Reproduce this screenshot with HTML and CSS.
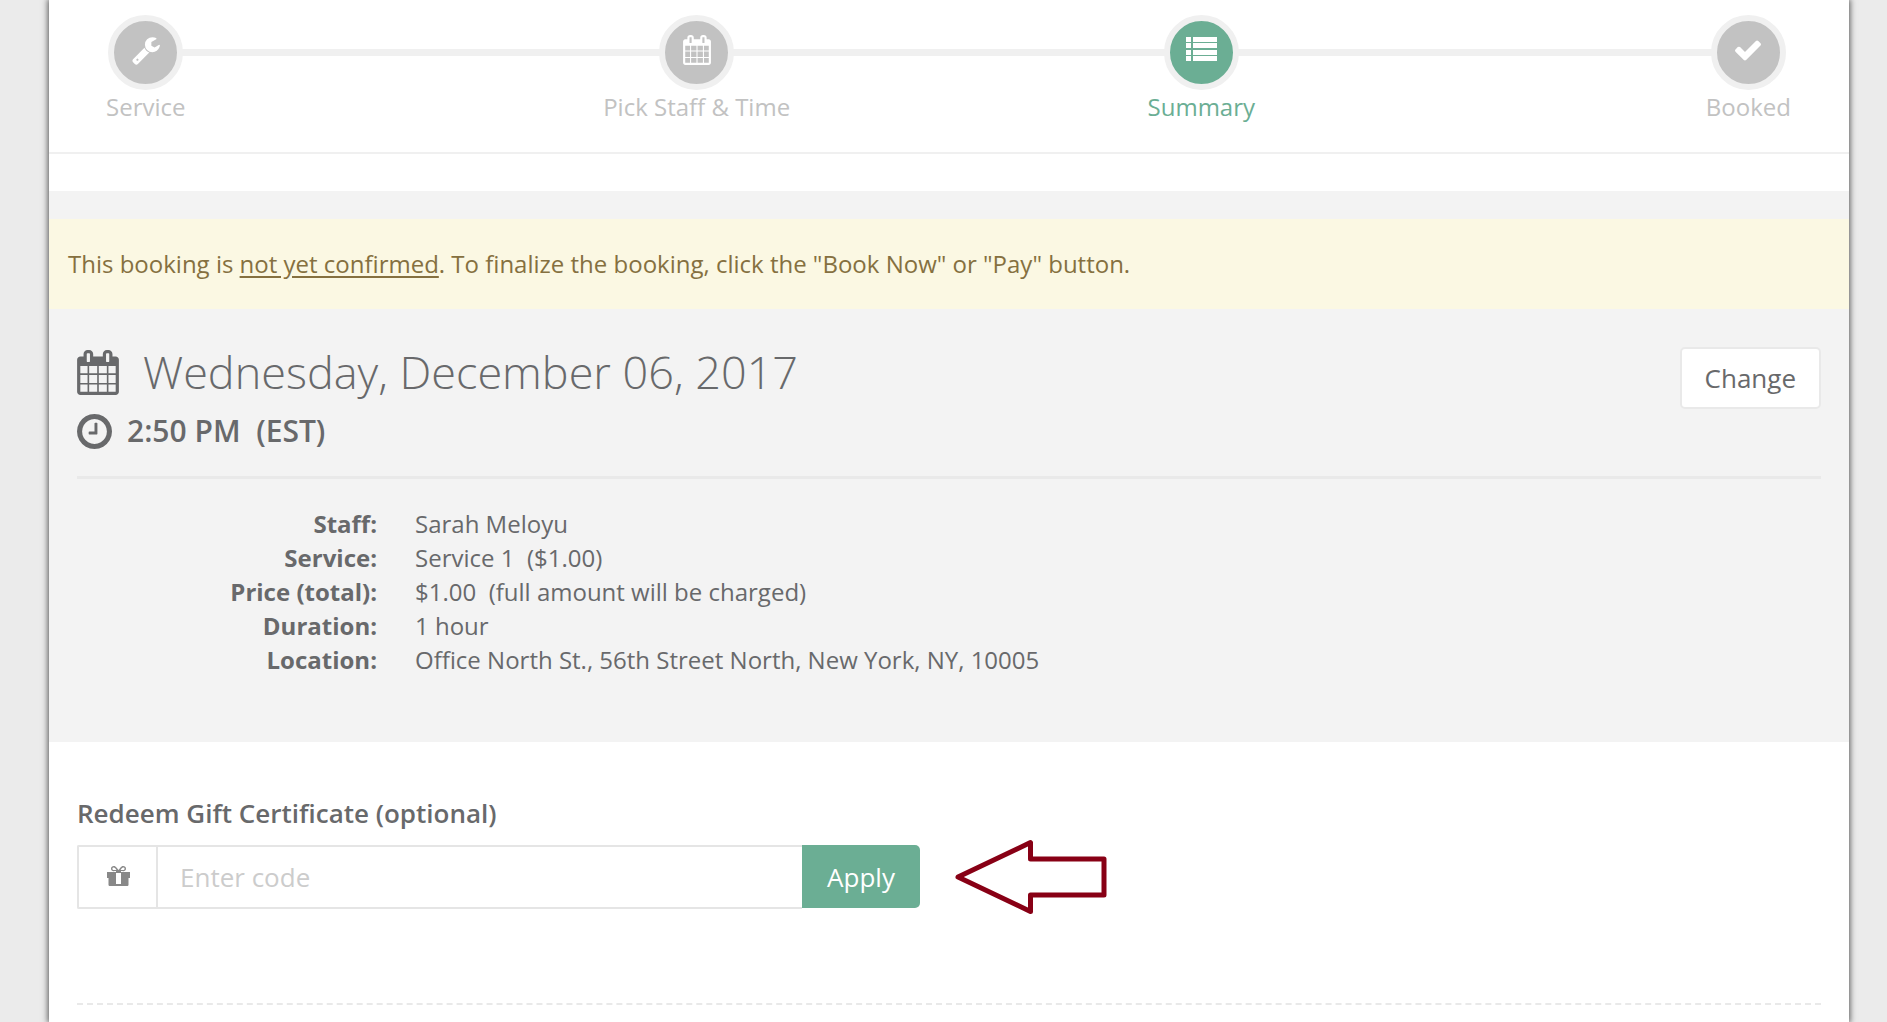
FILE: index.html
```html
<!DOCTYPE html>
<html lang="en">
<head>
  <meta charset="utf-8">
  <title>Booking Summary</title>
  <link rel="stylesheet" href="styles.css">
</head>
<body>
  <main class="booking">
    <ol class="steps">
      <li class="step">
        <span class="step-icon">
          <svg viewBox="0 0 1792 1792"><path d="M448 1472q0-26-19-45t-45-19-45 19-19 45 19 45 45 19 45-19 19-45zm644-420l-682 682q-37 37-90 37-52 0-91-37l-106-108q-38-36-38-90 0-53 38-91l681-681q39 98 114.5 173.5t173.5 114.5zm634-435q0 39-23 106-47 134-164.5 217.5t-258.5 83.5q-185 0-316.5-131.5t-131.5-316.5 131.5-316.5 316.5-131.5q58 0 121.5 16.5t107.5 46.5q16 11 16 28t-16 28l-293 169v224l193 107q5-3 79-48.5t135.5-81 70.5-35.5q15 0 23.5 10t8.5 25z"/></svg>
        </span>
        <span>Service</span>
      </li>
      <li class="step">
        <span class="step-icon">
          <svg viewBox="0 0 1792 1792"><path d="M192 1664h288v-288h-288v288zm352 0h320v-288h-320v288zm-352-352h288v-320h-288v320zm352 0h320v-320h-320v320zm-352-384h288v-288h-288v288zm736 736h320v-288h-320v288zm-384-736h320v-288h-320v288zm768 736h288v-288h-288v288zm-384-352h320v-320h-320v320zm-352-864v-288q0-13-9.5-22.5t-22.5-9.5h-64q-13 0-22.5 9.5t-9.5 22.5v288q0 13 9.5 22.5t22.5 9.5h64q13 0 22.5-9.5t9.5-22.5zm736 864h288v-320h-288v320zm-384-384h320v-288h-320v288zm384 0h288v-288h-288v288zm32-480v-288q0-13-9.5-22.5t-22.5-9.5h-64q-13 0-22.5 9.5t-9.5 22.5v288q0 13 9.5 22.5t22.5 9.5h64q13 0 22.5-9.5t9.5-22.5zm384-64v1280q0 52-38 90t-90 38h-1408q-52 0-90-38t-38-90v-1280q0-52 38-90t90-38h128v-96q0-66 47-113t113-47h64q66 0 113 47t47 113v96h384v-96q0-66 47-113t113-47h64q66 0 113 47t47 113v96h128q52 0 90 38t38 90z"/></svg>
        </span>
        <span>Pick Staff &amp; Time</span>
      </li>
      <li class="step active">
        <span class="step-icon">
          <svg class="list-icon" viewBox="0 0 31 30"><path d="M0 2h5v5H0zM7 2h24v5H7zM0 8h5v5H0zM7 8h24v5H7zM0 15h5v5H0zM7 15h24v5H7zM0 21h5v5H0zM7 21h24v5H7z"/></svg>
        </span>
        <span>Summary</span>
      </li>
      <li class="step">
        <span class="step-icon">
          <svg viewBox="0 0 1792 1792"><path d="M1671 566q0 40-28 68l-724 724-136 136q-28 28-68 28t-68-28l-136-136-362-362q-28-28-28-68t28-68l136-136q28-28 68-28t68 28l294 295 656-657q28-28 68-28t68 28l136 136q28 28 28 68z"/></svg>
        </span>
        <span>Booked</span>
      </li>
    </ol>

    <section class="summary">
      <p class="notice">This booking is <u>not yet confirmed</u>. To finalize the booking, click the "Book Now" or "Pay" button.</p>
      <div class="summary-body">
        <header class="when">
          <div>
            <h1 class="date">
              <svg class="date-icon" viewBox="64 0 1664 1792"><path d="M192 1664h288v-288h-288v288zm352 0h320v-288h-320v288zm-352-352h288v-320h-288v320zm352 0h320v-320h-320v320zm-352-384h288v-288h-288v288zm736 736h320v-288h-320v288zm-384-736h320v-288h-320v288zm768 736h288v-288h-288v288zm-384-352h320v-320h-320v320zm-352-864v-288q0-13-9.5-22.5t-22.5-9.5h-64q-13 0-22.5 9.5t-9.5 22.5v288q0 13 9.5 22.5t22.5 9.5h64q13 0 22.5-9.5t9.5-22.5zm736 864h288v-320h-288v320zm-384-384h320v-288h-320v288zm384 0h288v-288h-288v288zm32-480v-288q0-13-9.5-22.5t-22.5-9.5h-64q-13 0-22.5 9.5t-9.5 22.5v288q0 13 9.5 22.5t22.5 9.5h64q13 0 22.5-9.5t9.5-22.5zm384-64v1280q0 52-38 90t-90 38h-1408q-52 0-90-38t-38-90v-1280q0-52 38-90t90-38h128v-96q0-66 47-113t113-47h64q66 0 113 47t47 113v96h384v-96q0-66 47-113t113-47h64q66 0 113 47t47 113v96h128q52 0 90 38t38 90z"/></svg>
              Wednesday, December 06, 2017
            </h1>
            <p class="time">
              <svg class="time-icon" viewBox="128 128 1536 1536"><path d="M1024 544v448q0 14-9 23t-23 9h-320q-14 0-23-9t-9-23v-64q0-14 9-23t23-9h224v-352q0-14 9-23t23-9h64q14 0 23 9t9 23zm416 352q0-148-73-273t-198-198-273-73-273 73-198 198-73 273 73 273 198 198 273 73 273-73 198-198 73-273zm224 0q0 209-103 385.5t-279.5 279.5-385.5 103-385.5-103-279.5-279.5-103-385.5 103-385.5 279.5-279.5 385.5-103 385.5 103 279.5 279.5 103 385.5z"/></svg>
              2:50 PM&nbsp; (EST)
            </p>
          </div>
          <button type="button" class="change-button">Change</button>
        </header>
        <dl class="details">
          <dt>Staff:</dt>
          <dd>Sarah Meloyu</dd>
          <dt>Service:</dt>
          <dd>Service 1&nbsp; ($1.00)</dd>
          <dt>Price (total):</dt>
          <dd>$1.00&nbsp; (full amount will be charged)</dd>
          <dt>Duration:</dt>
          <dd>1 hour</dd>
          <dt>Location:</dt>
          <dd>Office North St., 56th Street North, New York, NY, 10005</dd>
        </dl>
      </div>
    </section>

    <form class="gift">
      <label for="code">Redeem Gift Certificate (optional)</label>
      <div class="gift-row">
        <div class="input-group">
          <span class="addon">
            <svg viewBox="0 0 23 20"><path fill-rule="evenodd" d="M0 6h9V5H7.500A2.500 2.500 0 0 1 4 2.700C4 .8 5.300 0 6.800 0c1.200 0 2 .6 2.700 1.500l2 2.500 2-2.500C14.200.6 15 0 16.200 0 17.700 0 19 .8 19 2.700A2.500 2.500 0 0 1 15.500 5H14v1h9v6h-1.500v7.200l-.8.800H2.300l-.8-.8V12H0zM6.800 1.500c-1 0-1.400.6-1.400 1.200 0 .8.600 1.300 1.400 1.300h2.700L8 2.100c-.4-.4-.7-.6-1.200-.6zM16.200 1.500c-.5 0-.8.2-1.200.6L13.500 4h2.700c.8 0 1.400-.5 1.400-1.300 0-.6-.4-1.200-1.400-1.200zM9 7v11h5V7z"/></svg>
          </span>
          <input type="text" id="code" placeholder="Enter code">
          <button type="button" class="apply-button">Apply</button>
        </div>
        <svg class="arrow" viewBox="0 0 152 76"><path d="M3 38 75.500 3.500V20H149v36H75.500v16.500z"/></svg>
      </div>
    </form>
  </main>
</body>
</html>
```
FILE: styles.css
```css
* {
  box-sizing: border-box;
}

body {
  margin: 0;
  padding: 0 38px 0 49px;
  background: #ebebeb;
  color: #68696b;
  font-family: "Open Sans", "Noto Sans", sans-serif;
  font-size: 24px;
  line-height: 34px;
}

svg {
  display: block;
  flex: none;
  fill: currentColor;
}

.booking {
  min-height: 100vh;
  background: #fff;
  box-shadow: 0 0 6px 1px #555;
}

/* progress steps */
.steps {
  position: relative;
  z-index: 0;
  display: grid;
  grid-template-columns: auto 416fr auto 356fr auto 449fr auto;
  margin: 0;
  padding: 15px 58px 28px 57px;
  border-bottom: 2px solid #f0f0f0;
  list-style: none;
  color: #c2c2c2;
}

.steps::before {
  content: "";
  position: absolute;
  z-index: -1;
  top: 49px;
  left: 96px;
  right: 100px;
  height: 7px;
  background: #f0f0f0;
}

.step {
  display: flex;
  flex-direction: column;
  align-items: center;
}

.step:nth-child(2) {
  grid-column: 3;
}

.step:nth-child(3) {
  grid-column: 5;
}

.step:nth-child(4) {
  grid-column: 7;
}

.step-icon {
  display: flex;
  align-items: center;
  justify-content: center;
  width: 75px;
  height: 75px;
  padding-bottom: 5px;
  border: 6px solid #f0f0f0;
  border-radius: 50%;
  background: #c2c2c2;
  color: #fff;
}

.step-icon svg {
  width: 30px;
  height: 30px;
}

.step-icon .list-icon {
  width: 31px;
}

.active {
  color: #6bae94;
}

.active .step-icon {
  background: #6bae94;
}

/* booking summary */
.summary {
  margin-top: 37px;
  padding-top: 28px;
  background: #f3f3f3;
}

.notice {
  margin: 0;
  padding: 28px 19px;
  background: #fbf8e3;
  color: #857040;
}

.notice u {
  text-underline-offset: 3px;
}

.summary-body {
  padding: 38px 28px 65px;
}

.when {
  display: flex;
  align-items: flex-start;
  justify-content: space-between;
  padding-bottom: 25px;
  border-bottom: 3px solid #e9e9e9;
}

.date,
.time {
  display: flex;
  align-items: center;
  margin: 0;
}

.date {
  gap: 24px;
  font-size: 45px;
  font-weight: 300;
  line-height: 50px;
}

.date-icon {
  width: 42px;
  height: 45px;
}

.time {
  gap: 15px;
  margin-top: 14px;
  font-size: 30px;
  font-weight: 600;
  line-height: 40px;
}

.time-icon {
  width: 35px;
  height: 35px;
}

.change-button {
  height: 62px;
  padding: 0 23px;
  border: 2px solid #e9e9e9;
  border-radius: 5px;
  background: #fff;
  color: inherit;
  font: inherit;
  font-size: 26px;
}

.details {
  display: grid;
  grid-template-columns: 300px 1fr;
  column-gap: 38px;
  margin: 28px 0 0;
}

.details dt {
  font-weight: 700;
  text-align: right;
}

.details dd {
  margin: 0;
}

/* gift certificate */
.gift {
  margin: 0 28px;
  padding: 54px 0 88px;
  border-bottom: 2px dashed #e9e9e9;
}

.gift label {
  display: block;
  margin-bottom: 9px;
  font-size: 26px;
  font-weight: 600;
}

.gift-row {
  display: flex;
  align-items: center;
  gap: 35px;
}

.input-group {
  display: flex;
  width: 843px;
  height: 64px;
}

.addon {
  display: flex;
  align-items: center;
  justify-content: center;
  width: 79px;
  padding-left: 2px;
  padding-bottom: 2px;
  border: 2px solid #e5e5e5;
  border-right: 0;
  border-radius: 2px 0 0 2px;
  color: #888;
}

.addon svg {
  width: 23px;
  height: 20px;
}

.input-group input {
  flex: 1;
  min-width: 0;
  padding: 0 22px;
  border: 2px solid #e5e5e5;
  border-right: 0;
  border-radius: 0;
  color: inherit;
  font: inherit;
  font-size: 26px;
}

.input-group input::placeholder {
  color: #ccc;
}

.apply-button {
  width: 118px;
  height: 63px;
  padding: 0;
  border: 0;
  border-radius: 0 5px 5px 0;
  background: #6bae94;
  color: #fff;
  font: inherit;
  font-size: 26px;
}

.arrow {
  width: 152px;
  height: 76px;
  fill: none;
  stroke: #880015;
  stroke-width: 5;
  stroke-linejoin: round;
}
```
